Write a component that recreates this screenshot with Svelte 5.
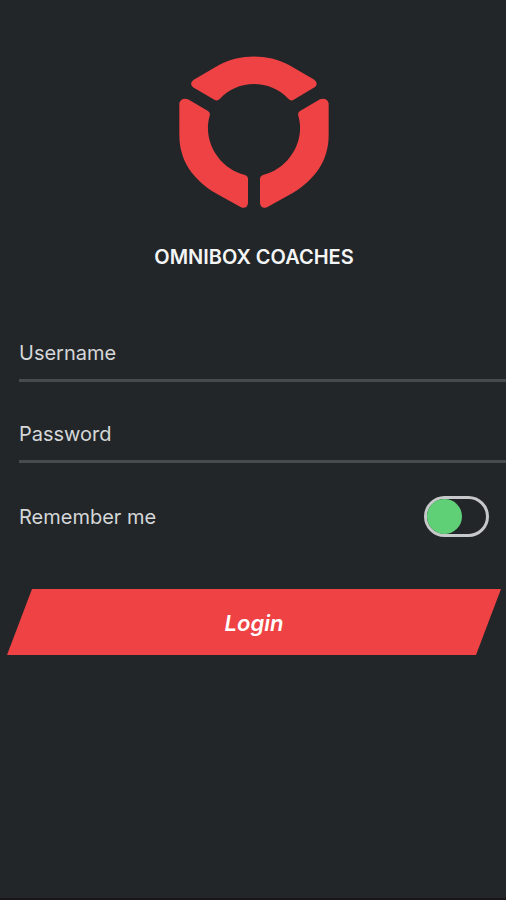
<script>
  let username = $state('')
  let password = $state('')
  let remember = $state(false)

  function handleSubmit(e) {
    e.preventDefault()
  }
</script>

<main class="login">
  <header class="brand">
    <svg class="brand__logo" viewBox="45 36 450 456" aria-hidden="true">
      <path d="M88 108 L165 63 C230 29 310 29 375 63 L451 107 Q464 118 453 129 L389 167 Q381 173 373 164 C318 105 222 105 168 164 Q160 173 151 167 L87 130 Q75 119 88 108 Z" />
      <path d="M72 166 L132 201 Q140 206 137 215 C115 290 164 373 243 393 Q252 396 252 405 L252 478 Q249 496 231 490 L154 447 C86 405 46 350 46 272 L46 178 Q51 160 72 166 Z" />
      <path d="M468 166 L408 201 Q400 206 403 215 C425 290 376 373 297 393 Q288 396 288 405 L288 478 Q291 496 309 490 L386 447 C454 405 494 350 494 272 L494 178 Q489 160 468 166 Z" />
    </svg>
    <h1 class="brand__name">OMNIBOX COACHES</h1>
  </header>

  <form onsubmit={handleSubmit}>
    <div class="fields">
      <input class="field" type="text" placeholder="Username" aria-label="Username" bind:value={username} />
      <input class="field" type="password" placeholder="Password" aria-label="Password" bind:value={password} />
    </div>
    <div class="remember">
      <label for="remember">Remember me</label>
      <input id="remember" class="switch" type="checkbox" role="switch" bind:checked={remember} />
    </div>
    <button class="submit" type="submit">Login</button>
  </form>
</main>

<style>
:global(body) {
  background: #222629;
}
.login {
  box-sizing: border-box;
  min-height: 100vh;
  padding-top: 56px;
  border-bottom: 2px solid #1b141b;
  background: #222629;
  color: #d5d7d8;
  font-family: Inter, "Liberation Sans", sans-serif;
  font-size: 20px;
  line-height: 24px;
}
.brand {
  display: flex;
  flex-direction: column;
  align-items: center;
  gap: 37px;
  padding-left: 2px;
}
.brand__logo {
  width: 150px;
  height: 152px;
  fill: #ee4244;
}
.brand__name {
  margin: 0;
  color: #f4f5f5;
  font-size: 20px;
  font-weight: 600;
}
.fields {
  display: flex;
  flex-direction: column;
  gap: 26px;
  margin-top: 58px;
  padding-left: 19px;
}
.field {
  width: 100%;
  height: 55px;
  box-sizing: border-box;
  padding: 0;
  border: 0;
  border-bottom: 3px solid #484b4e;
  border-radius: 0;
  outline: none;
  background: transparent;
  color: inherit;
  font: inherit;
}
.field::placeholder {
  color: inherit;
  opacity: 1;
}
.remember {
  display: flex;
  align-items: center;
  justify-content: space-between;
  margin-top: 33px;
  padding: 0 17px 0 19px;
}
.switch {
  appearance: none;
  display: flex;
  box-sizing: border-box;
  width: 65px;
  height: 41px;
  margin: 0;
  border: 3px solid #c6c8c9;
  border-radius: 21px;
  cursor: pointer;
}
.switch::before {
  content: "";
  width: 35px;
  height: 35px;
  border-radius: 50%;
  background: #60d077;
}
.switch:checked {
  justify-content: flex-end;
}
.submit {
  display: block;
  width: calc(100% - 12px);
  height: 66px;
  margin: 52px 5px 0 7px;
  padding: 2px 0 0;
  border: 0;
  background: #ee4244;
  clip-path: polygon(25px 0, 100% 0, calc(100% - 25px) 100%, 0 100%);
  color: #fff;
  font: italic 600 22px/24px Inter, "Liberation Sans", sans-serif;
  cursor: pointer;
}
</style>
